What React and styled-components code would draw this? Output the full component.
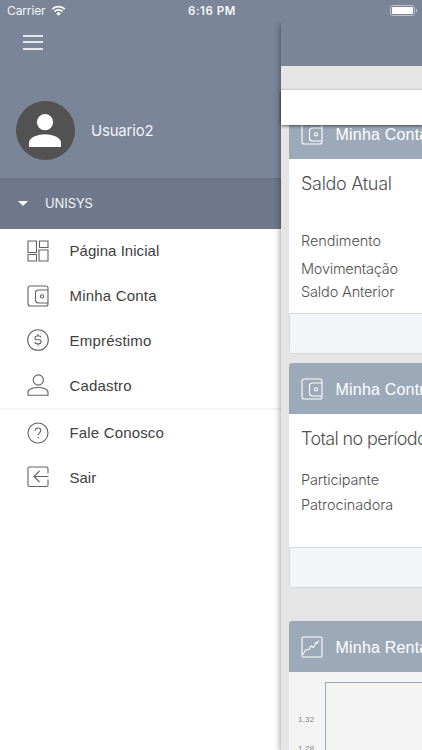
import React from 'react';
import styled, { createGlobalStyle } from 'styled-components';

const WalletIcon = () => (
    <Icon viewBox='0 0 22 22'>
        <rect x='1' y='1' width='20' height='20' rx='2' />
        <path d='M21 5H11.5a3 3 0 0 0-3 3v7a3 3 0 0 0 3 3H21' />
        <circle cx='15' cy='11.4' r='1.6' />
    </Icon>
);

const DashboardIcon = () => (
    <Icon viewBox='0 0 22 22'>
        <path d='M1 1h8.5v11.5H1zM12.5 1h8.5v6.5h-8.5zM1 14.5h8.5V21H1zM12 10h9v11h-9z' />
    </Icon>
);

const LoanIcon = () => (
    <Icon viewBox='0 0 22 22'>
        <circle cx='11' cy='11' r='10.3' />
        <path d='M14 8.6c0-1-.8-1.6-1.8-1.6H10c-1.2 0-2 .8-2 1.9s.8 1.9 2 1.9h2c1.3 0 2.100.8 2.100 1.900s-.8 2-2.100 2H9.700c-1 0-1.800-.7-1.800-1.700M11 5v2M11 14.700v2' />
    </Icon>
);

const PersonIcon = () => (
    <Icon viewBox='0 0 22 22'>
        <circle cx='11.3' cy='6' r='5.1' />
        <path d='M1 21.3v-3c0-3 5-4.8 10-4.8s10 1.8 10 4.8v3z' />
    </Icon>
);

const HelpIcon = () => (
    <Icon viewBox='0 0 22 22'>
        <circle cx='11' cy='11' r='10' />
        <path d='M8.2 8.7c0-1.7 1.2-2.7 2.8-2.7s2.8 1.1 2.8 2.6c0 2.2-2.7 2.3-2.7 5M11.1 15v1.3' />
    </Icon>
);

const ExitIcon = () => (
    <Icon viewBox='0 0 22 22'>
        <path d='M21 7.5V2.5A1.5 1.5 0 0 0 19.5 1h-17A1.5 1.5 0 0 0 1 2.5v16.5a1.5 1.5 0 0 0 1.5 1.5h17A1.5 1.5 0 0 0 21 19v-5.5M21.5 10.5H7M12.5 5 7 10.5l5.5 5.5' />
    </Icon>
);

const ChartIcon = () => (
    <Icon viewBox='0 0 22 22'>
        <rect x='1' y='1' width='20' height='20' rx='1' />
        <path d='M2 18.500l2.500-4.500 3.500-.5 2-3.500 2.500 1.500 2.500-5 1 1L18 4.500' />
    </Icon>
);

const menu = [
    { label: 'Página Inicial', icon: DashboardIcon, track: '0.04px' },
    { label: 'Minha Conta', icon: WalletIcon, track: '0.2px' },
    { label: 'Empréstimo', icon: LoanIcon, track: '0.2px' },
    { label: 'Cadastro', icon: PersonIcon, track: '0.18px' },
];

const support = [
    { label: 'Fale Conosco', icon: HelpIcon, track: '0.16px' },
    { label: 'Sair', icon: ExitIcon, track: '0px' },
];

const MenuItems = ({ items }) => (
    <MenuList>
        {items.map(({ label, icon: ItemIcon, track }) => (
            <MenuItem key={label}>
                <ItemIcon />
                <MenuLabel track={track}>{label}</MenuLabel>
            </MenuItem>
        ))}
    </MenuList>
);

const App = () => {
    return (
        <Screen>
            <GlobalStyle />
            <StatusBar>
                <Carrier>
                    Carrier
                    <WifiSvg viewBox='0 0 15 11'>
                        <path d='M1.200 4.200a9 9 0 0 1 12.600 0M3.500 6.500a5.800 5.800 0 0 1 8 0' />
                        <path className='dot' d='M7.500 10.700 5.200 8.400a3.300 3.300 0 0 1 4.600 0z' />
                    </WifiSvg>
                </Carrier>
                <Clock>6:16 PM</Clock>
                <Battery><Charge /></Battery>
            </StatusBar>
            <Content>
                <Drawer>
                    <Profile>
                        <Hamburger><i /><i /><i /></Hamburger>
                        <User>
                            <Avatar>
                                <svg viewBox='0 0 32 33' width='32' height='33'>
                                    <circle cx='16' cy='8.2' r='8.1' />
                                    <path d='M0 33v-4.5C0 23 10 20.2 16 20.2S32 23 32 28.5V33z' />
                                </svg>
                            </Avatar>
                            <UserName>Usuario2</UserName>
                        </User>
                    </Profile>
                    <Company><Caret />UNISYS</Company>
                    <MenuItems items={menu} />
                    <Divider />
                    <MenuItems items={support} />
                </Drawer>
                <Page>
                    <NavBar />
                    <Toolbar />
                    <Cards>
                        <Card height='246px'>
                            <CardHeader><WalletIcon /><CardTitle>Minha Conta</CardTitle></CardHeader>
                            <CardBody>
                                <Total track='-0.3px'>Saldo Atual</Total>
                                <Line top='34px' track='-0.05px'>Rendimento</Line>
                                <Line top='4px' track='-0.22px'>Movimentação</Line>
                                <Line top='0px' track='-0.15px'>Saldo Anterior</Line>
                            </CardBody>
                            <CardFooter />
                        </Card>
                        <Card height='225px' top='9px'>
                            <CardHeader><WalletIcon /><CardTitle>Minha Contribuição</CardTitle></CardHeader>
                            <CardBody>
                                <Total track='-0.62px'>Total no período</Total>
                                <Line top='18px' track='-0.15px'>Participante</Line>
                                <Line top='1px' track='-0.1px'>Patrocinadora</Line>
                            </CardBody>
                            <CardFooter />
                        </Card>
                        <Card height='250px' top='33px'>
                            <CardHeader><ChartIcon /><CardTitle>Minha Rentabilidade</CardTitle></CardHeader>
                            <Chart>
                                <Axis><span>1,32</span><span>1,28</span></Axis>
                                <Plot />
                            </Chart>
                        </Card>
                    </Cards>
                </Page>
            </Content>
        </Screen>
    );
};

const GlobalStyle = createGlobalStyle`
    * {
        box-sizing: border-box;
    }
    body {
        margin: 0;
        overflow: hidden;
        font-family: "Liberation Sans", Arial, sans-serif;
    }
`;

const Screen = styled.div`
    display: flex;
    flex-direction: column;
    width: 422px;
    height: 750px;
    overflow: hidden;
    background: #fff;
`;

const StatusBar = styled.header`
    display: grid;
    grid-template-columns: 1fr 60px 1fr;
    align-items: center;
    flex: none;
    height: 21px;
    padding: 1px 5px 0 7px;
    background: #7a8597;
    color: #f4f6f9;
    font-family: Inter, "Liberation Sans", sans-serif;
    font-size: 12px;
`;

const Carrier = styled.div`
    display: flex;
    align-items: center;
    gap: 5.5px;
    margin-top: -1px;
    letter-spacing: -0.12px;
`;

const WifiSvg = styled.svg`
    width: 15px;
    height: 11px;
    margin-top: -1px;
    fill: none;
    stroke: #fff;
    stroke-width: 1.8;

    .dot {
        fill: #fff;
        stroke: none;
    }
`;

const Clock = styled.div`
    font-weight: 600;
    font-size: 11.5px;
    letter-spacing: 0.55px;
    text-align: center;
    white-space: nowrap;
`;

const Battery = styled.div`
    position: relative;
    justify-self: end;
    width: 25px;
    height: 11px;
    margin: -1px 2px 0 0;
    padding: 1px;
    border: 1px solid #bcc3ce;
    border-radius: 3px;

    &:after {
        content: "";
        position: absolute;
        top: 3px;
        right: -3px;
        width: 1px;
        height: 3px;
        background: #bcc3ce;
    }
`;

const Charge = styled.div`
    height: 100%;
    background: #fff;
    border-radius: 1px;
`;

const Content = styled.div`
    display: flex;
    flex: 1;
    min-height: 0;
`;

const Drawer = styled.aside`
    flex: none;
    width: 281px;
    background: #fff;
`;

const Profile = styled.div`
    height: 157px;
    padding: 14px 0 0 15.5px;
    background: #7a8597;
`;

const Hamburger = styled.div`
    display: flex;
    flex-direction: column;
    gap: 4.7px;
    width: 20px;
    margin-left: 7.5px;

    i {
        height: 1.8px;
        background: #e3e7f0;
    }
`;

const User = styled.div`
    display: flex;
    align-items: center;
    margin-top: 51px;
`;

const Avatar = styled.div`
    display: flex;
    justify-content: center;
    width: 59px;
    height: 59px;
    padding-top: 13px;
    border-radius: 50%;
    background: #525252;
    fill: #fff;
`;

const UserName = styled.div`
    margin: 1px 0 0 16.5px;
    color: #f1f4f8;
    font-family: Inter, "Liberation Sans", sans-serif;
    font-size: 15px;
    letter-spacing: -0.2px;
`;

const Company = styled.div`
    display: flex;
    align-items: center;
    height: 50.5px;
    padding-left: 18px;
    background: linear-gradient(#687284, #6f788a 4px);
    color: #f1f4f8;
    font-family: Inter, "Liberation Sans", sans-serif;
    font-size: 13px;
    letter-spacing: -0.1px;
`;

const Caret = styled.i`
    margin-right: 17px;
    border: 5px solid transparent;
    border-top-color: #fff;
    border-bottom: 0;
`;

const Icon = styled.svg`
    flex: none;
    width: 22px;
    height: 22px;
    fill: none;
    stroke: currentColor;
    stroke-width: 1.1;
    overflow: visible;
`;

const MenuList = styled.ul`
    margin: 0;
    padding: 0;
    list-style: none;
`;

const MenuItem = styled.li`
    display: flex;
    align-items: center;
    height: 44.8px;
    padding-left: 27px;
    color: #636363;
`;

const MenuLabel = styled.span`
    margin-left: 20.5px;
    color: #404040;
    font-size: 15px;
    letter-spacing: ${props => props.track};
`;

const Divider = styled.div`
    height: 2px;
    margin-bottom: 0.5px;
    background: #f5f5f5;
`;

const Page = styled.main`
    display: flex;
    flex-direction: column;
    flex: 1;
    min-width: 0;
    background: #e5e5e5;
    box-shadow: 0 2px 7px rgba(0, 0, 0, .45);
    clip-path: inset(0 0 0 -12px);
`;

const NavBar = styled.div`
    flex: none;
    height: 45px;
    background: #7a8597;
`;

const Toolbar = styled.div`
    position: relative;
    z-index: 1;
    flex: none;
    height: 34.5px;
    margin-top: 24px;
    background: #fff;
    box-shadow: 0 1px 3px rgba(0, 0, 0, .6);
`;

const Cards = styled.div`
    flex: 1;
    min-height: 0;
    margin-top: -16.5px;
    padding-left: 8px;
    overflow: hidden;
`;

const Card = styled.section`
    display: flex;
    flex-direction: column;
    width: 358px;
    height: ${props => props.height};
    ${props => props.top ? `margin-top: ${props.top};` : null}
    border-radius: 3px;
    background: #fff;
    overflow: hidden;
`;

const CardHeader = styled.div`
    display: flex;
    align-items: center;
    flex: none;
    height: 51px;
    padding-left: 12px;
    background: #9ca9b9;
    color: #fff;
`;

const CardTitle = styled.h2`
    margin: 2px 0 0 12.5px;
    font-size: 16px;
    font-weight: normal;
    letter-spacing: 0.2px;
    white-space: nowrap;
`;

const CardBody = styled.div`
    flex: 1;
    padding: 14px 0 0 12px;
    color: #505050;
    font-family: Inter, "Liberation Sans", sans-serif;
    font-weight: 300;
`;

const Total = styled.div`
    font-size: 18px;
    line-height: 22px;
    letter-spacing: ${props => props.track};
    white-space: nowrap;
`;

const Line = styled.div`
    margin-top: ${props => props.top};
    font-size: 14.5px;
    line-height: 23.5px;
    letter-spacing: ${props => props.track};
`;

const CardFooter = styled.div`
    flex: none;
    height: 41px;
    border: 1px solid #d6d7d9;
    border-radius: 0 0 3px 3px;
    background: #f4f5f8;
`;

const Chart = styled.div`
    display: flex;
    flex: 1;
    padding-top: 10px;
    background: #f4f4f4;
`;

const Axis = styled.div`
    display: flex;
    flex-direction: column;
    gap: 18px;
    width: 36px;
    padding: 32px 0 0 9px;
    color: #858585;
    font-size: 8px;
    line-height: 11px;
    letter-spacing: 0.2px;
`;

const Plot = styled.div`
    flex: 1;
    border: 1px solid #9ca9b9;
`;

export default App;
